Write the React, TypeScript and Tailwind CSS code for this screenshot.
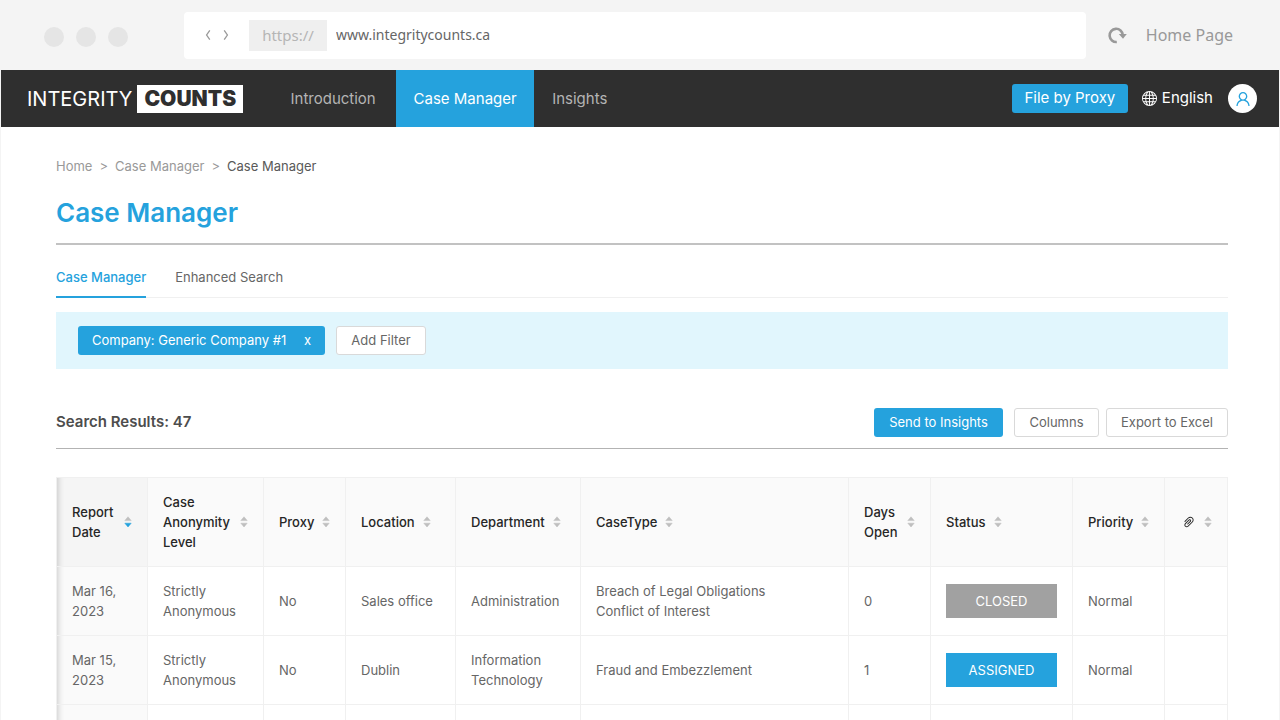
import type { ReactNode } from "react";
import { AiOutlinePaperClip, AiOutlineUser } from "react-icons/ai";
import { BsGlobe } from "react-icons/bs";

type Column = { key: string; label: ReactNode; width: string; sorted?: boolean };

const columns: Column[] = [
  { key: "date", label: "Report Date", width: "w-[91px]", sorted: true },
  { key: "anonymity", label: "Case Anonymity Level", width: "w-[116px]" },
  { key: "proxy", label: "Proxy", width: "w-[82px]" },
  { key: "location", label: "Location", width: "w-[110px]" },
  { key: "department", label: "Department", width: "w-[125px]" },
  { key: "type", label: "CaseType", width: "" },
  { key: "days", label: "Days Open", width: "w-[82px]" },
  { key: "status", label: "Status", width: "w-[142px]" },
  { key: "priority", label: "Priority", width: "w-[92px]" },
  { key: "files", label: <AiOutlinePaperClip className="ml-0.5 size-3.5" aria-label="Attachments" />, width: "w-[63px]" },
];

type CaseRow = {
  date: string;
  anonymity: string;
  proxy: string;
  location: string;
  department: string;
  types: string[];
  days: string;
  status: string;
  priority: string;
};

const rows: CaseRow[] = [
  {
    date: "Mar 16, 2023",
    anonymity: "Strictly Anonymous",
    proxy: "No",
    location: "Sales office",
    department: "Administration",
    types: ["Breach of Legal Obligations", "Conflict of Interest"],
    days: "0",
    status: "CLOSED",
    priority: "Normal",
  },
  {
    date: "Mar 15, 2023",
    anonymity: "Strictly Anonymous",
    proxy: "No",
    location: "Dublin",
    department: "Information Technology",
    types: ["Fraud and Embezzlement"],
    days: "1",
    status: "ASSIGNED",
    priority: "Normal",
  },
];

function SortIcon({ active }: { active?: boolean }) {
  return (
    <svg viewBox="0 0 8 12" className="h-3 w-2 shrink-0" aria-hidden="true">
      <path d="M4 0.8 L7.2 4.6 H0.8 Z" fill="#bfbfbf" stroke="#bfbfbf" strokeWidth="0.5" strokeLinejoin="round" />
      <path
        d="M4 11 L7.2 7.2 H0.8 Z"
        fill={active ? "#25a2dd" : "#bfbfbf"}
        stroke={active ? "#25a2dd" : "#bfbfbf"}
        strokeWidth="0.5"
        strokeLinejoin="round"
      />
    </svg>
  );
}

function BrowserBar() {
  return (
    <div className="flex h-[70px] shrink-0 items-center bg-[#f4f4f4] font-['Noto_Sans',sans-serif]">
      <div className="flex gap-3 pt-1 pl-11">
        <span className="size-5 rounded-full bg-[#e5e5e5]" />
        <span className="size-5 rounded-full bg-[#e5e5e5]" />
        <span className="size-5 rounded-full bg-[#e5e5e5]" />
      </div>
      <div className="ml-[56px] flex h-[47px] flex-1 items-center rounded bg-white pl-[19px]">
        <button type="button" aria-label="Back" className="p-0.5">
          <svg viewBox="0 0 6 12" className="h-3 w-1.5" fill="none" stroke="#999" strokeWidth="1.3">
            <path d="M4.8 1.4 L1.6 6 L4.8 10.6" />
          </svg>
        </button>
        <button type="button" aria-label="Forward" className="ml-2 p-0.5">
          <svg viewBox="0 0 6 12" className="h-3 w-1.5" fill="none" stroke="#999" strokeWidth="1.3">
            <path d="M1.2 1.4 L4.4 6 L1.2 10.6" />
          </svg>
        </button>
        <span className="ml-[18px] flex h-[31px] w-[78px] items-center justify-center bg-[#efefef] text-[15px] text-[#b5b5b5]">
          https://
        </span>
        <input
          aria-label="Address"
          defaultValue="www.integritycounts.ca"
          className="ml-[9px] min-w-0 flex-1 bg-transparent text-sm text-[#666] outline-none"
        />
      </div>
      <button type="button" aria-label="Reload" className="ml-[22px]">
        <svg viewBox="0 0 20 18" className="h-[18px] w-5">
          <path d="M8.8 16 A6.6 6.6 0 1 1 14.8 9" fill="none" stroke="#999" strokeWidth="2.6" />
          <path d="M10.8 8 H18.8 L15 12.8 Z" fill="#999" />
        </svg>
      </button>
      <a href="#home" className="mr-[47px] ml-[18px] text-base text-[#999]">
        Home Page
      </a>
    </div>
  );
}

function NavBar() {
  return (
    <header className="flex h-[57px] shrink-0 items-center bg-[#2f2f2f] pr-[22px] pl-[26px] text-[15px]">
      <a href="#top" className="flex items-center gap-[5px] text-white">
        <span className="text-xl">INTEGRITY</span>
        <span className="flex h-7 items-center bg-white px-[7px] text-[21px] font-black text-[#2f2f2f]">COUNTS</span>
      </a>
      <nav className="ml-[27px] flex h-full text-[#b4b4b4]">
        <a href="#introduction" className="flex w-[126px] items-center justify-center pt-px">Introduction</a>
        <a href="#cases" className="flex w-[138px] items-center justify-center bg-[#25a2dd] pt-px text-white">Case Manager</a>
        <a href="#insights" className="flex items-center px-[18px] pt-px">Insights</a>
      </nav>
      <div className="ml-auto flex items-center text-white">
        <button type="button" className="h-[29px] w-[116px] rounded-[3px] bg-[#25a2dd]">File by Proxy</button>
        <button type="button" className="ml-3.5 flex items-center gap-[5px]">
          <BsGlobe className="size-[15px]" />
          English
        </button>
        <button
          type="button"
          aria-label="Account"
          className="ml-[15px] flex size-[29px] items-center justify-center rounded-full bg-white text-[#25a2dd]"
        >
          <AiOutlineUser className="size-[18px]" />
        </button>
      </div>
    </header>
  );
}

function OutlineButton({ width, children }: { width: string; children: ReactNode }) {
  return (
    <button type="button" className={`h-[29px] rounded-[3px] border border-[#d9d9d9] bg-white ${width}`}>
      {children}
    </button>
  );
}

export default function App() {
  const cell = "border-r border-b border-[#f0f0f0] px-[15px]";
  return (
    <div className="flex h-screen flex-col overflow-hidden bg-white font-['Inter',sans-serif] text-[13px] text-[#666]">
      <BrowserBar />
      <div className="flex-1 border-x border-[#f4f4f4]">
        <NavBar />
        <main className="pr-[51px] pl-[55px]">
          <nav aria-label="Breadcrumb" className="flex gap-[7px] pt-[29px] leading-5 text-[#999]">
            <a href="#home">Home</a>
            <span>&gt;</span>
            <a href="#cases">Case Manager</a>
            <span>&gt;</span>
            <span className="text-[#595959]">Case Manager</span>
          </nav>
          <h1 className="mt-[21px] border-b-2 border-[#c2c2c2] pb-3.5 text-[26px] leading-8 font-semibold text-[#25a2dd]">
            Case Manager
          </h1>
          <div role="tablist" className="flex gap-[29px] border-b border-[#f0f0f0] pt-[22px]">
            <button type="button" role="tab" aria-selected="true" className="-mb-px border-b-2 border-[#25a2dd] pb-[9px] leading-5 font-medium text-[#25a2dd]">
              Case Manager
            </button>
            <button type="button" role="tab" aria-selected="false" className="pb-2.5 leading-5">
              Enhanced Search
            </button>
          </div>
          <div className="mt-3.5 flex h-[57px] items-center gap-[11px] bg-[#e1f6fd] px-[22px]">
            <button type="button" className="flex h-[29px] w-[247px] items-center justify-between rounded-[3px] bg-[#25a2dd] px-3.5 text-white">
              Company: Generic Company #1
              <span>x</span>
            </button>
            <OutlineButton width="w-[90px]">Add Filter</OutlineButton>
          </div>
          <div className="mt-7 flex items-center border-b border-[#b3b3b3] py-[11px]">
            <h2 className="text-[15px] font-semibold text-[#4d4d4d]">Search Results: 47</h2>
            <div className="ml-auto flex items-center">
              <button type="button" className="mr-[11px] h-[29px] w-[129px] rounded-[3px] bg-[#25a2dd] text-white">
                Send to Insights
              </button>
              <div className="flex gap-[7px]">
                <OutlineButton width="w-[85px]">Columns</OutlineButton>
                <OutlineButton width="w-[122px]">Export to Excel</OutlineButton>
              </div>
            </div>
          </div>
          <div className="mt-7 shadow-[inset_7px_0_6px_-5px_rgba(0,0,0,0.2)]">
            <table className="w-full table-fixed border-separate border-spacing-0 border-t border-l border-[#f0f0f0] text-left leading-5">
              <thead>
                <tr className="h-[89px]">
                  {columns.map((c) => (
                    <th
                      key={c.key}
                      scope="col"
                      className={`${cell} ${c.width} ${c.sorted ? "bg-black/4" : "bg-[#fafafa]"} font-medium text-[#262626]`}
                    >
                      <button type="button" className="flex items-center gap-2 text-left">
                        <span>{c.label}</span>
                        <SortIcon active={c.sorted} />
                      </button>
                    </th>
                  ))}
                </tr>
              </thead>
              <tbody>
                {rows.map((r) => (
                  <tr key={r.date} className="h-[69px]">
                    <td className={`${cell} bg-black/2`}>{r.date}</td>
                    <td className={cell}>{r.anonymity}</td>
                    <td className={cell}>{r.proxy}</td>
                    <td className={cell}>{r.location}</td>
                    <td className={cell}>{r.department}</td>
                    <td className={cell}>
                      {r.types.map((t) => (
                        <div key={t}>{t}</div>
                      ))}
                    </td>
                    <td className={cell}>{r.days}</td>
                    <td className={cell}>
                      <span
                        className={`flex h-[34px] items-center justify-center text-white ${
                          r.status === "CLOSED" ? "bg-[#a1a1a1]" : "bg-[#25a2dd]"
                        }`}
                      >
                        {r.status}
                      </span>
                    </td>
                    <td className={cell}>{r.priority}</td>
                    <td className={cell} />
                  </tr>
                ))}
                <tr className="h-[69px]">
                  {columns.map((c) => (
                    <td key={c.key} className={`${cell} ${c.sorted ? "bg-black/2" : ""}`} />
                  ))}
                </tr>
              </tbody>
            </table>
          </div>
        </main>
      </div>
    </div>
  );
}
